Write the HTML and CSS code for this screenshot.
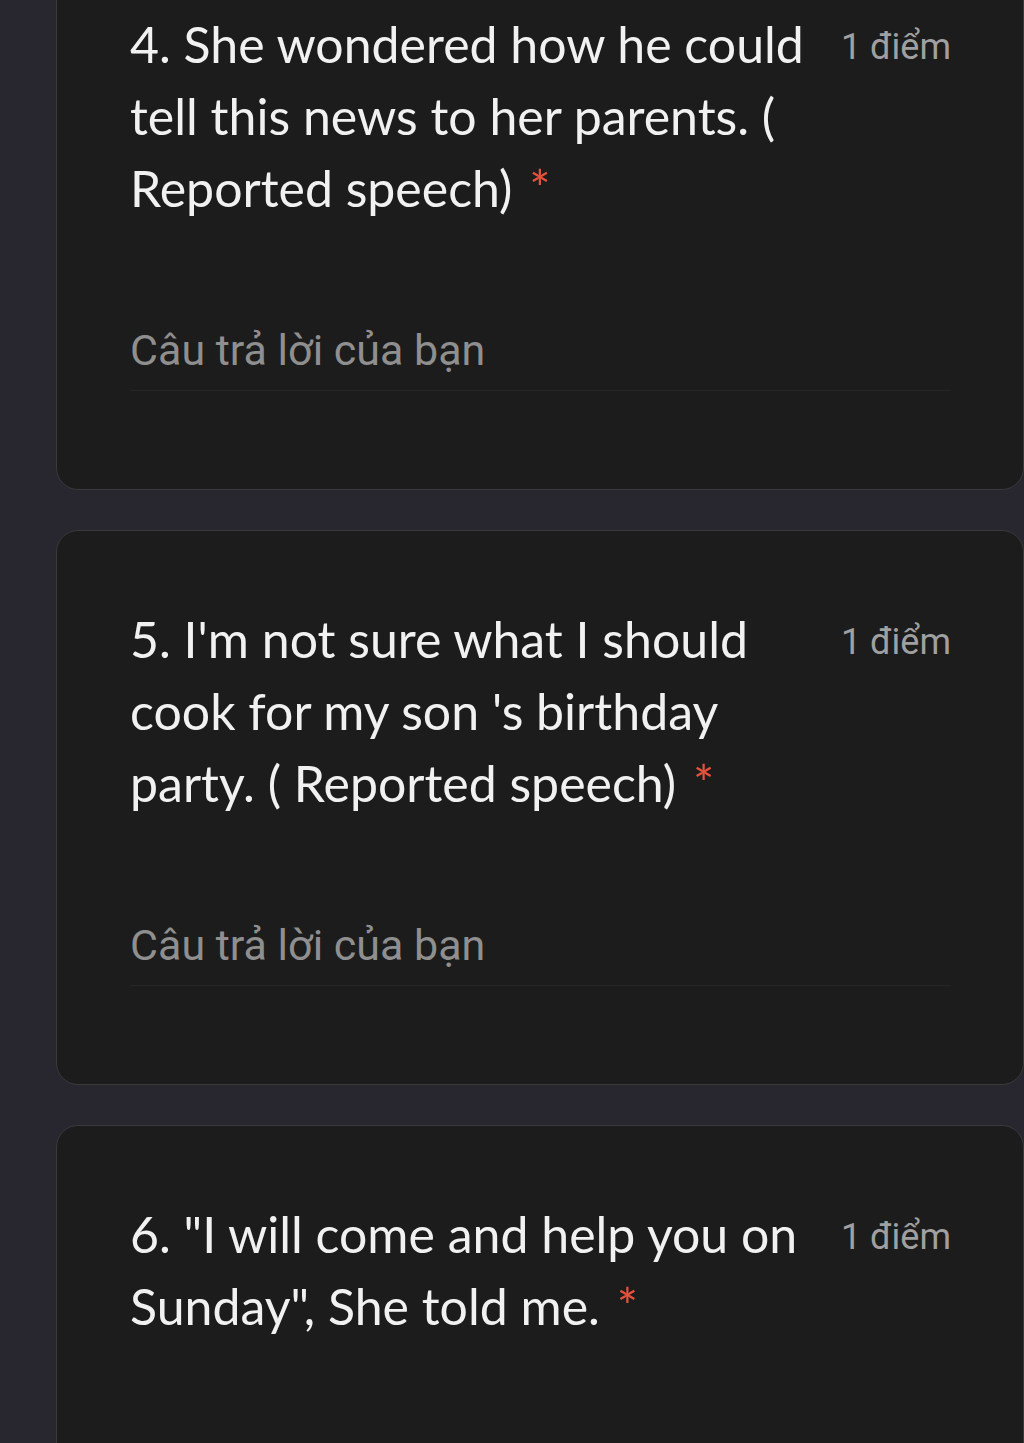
FILE: index.html
```html
<!DOCTYPE html>
<html lang="vi">
<head>
<meta charset="utf-8">
<title>Form</title>
<link rel="stylesheet" href="styles.css">
</head>
<body>
<div class="form">
  <section class="card">
    <div class="q-head">
      <div class="q-title">4. She wondered how he could<br>tell this news to her parents. (<br>Reported speech) <span class="req">*</span></div>
      <div class="q-points">1 điểm</div>
    </div>
    <div class="answer"><span class="placeholder">Câu trả lời của bạn</span></div>
  </section>
  <section class="card">
    <div class="q-head">
      <div class="q-title">5. I'm not sure what I should<br>cook for my son 's birthday<br>party. ( Reported speech) <span class="req">*</span></div>
      <div class="q-points">1 điểm</div>
    </div>
    <div class="answer"><span class="placeholder">Câu trả lời của bạn</span></div>
  </section>
  <section class="card card-last">
    <div class="q-head">
      <div class="q-title">6. "I will come and help you on<br>Sunday", She told me. <span class="req">*</span></div>
      <div class="q-points">1 điểm</div>
    </div>
  </section>
</div>
</body>
</html>
```
FILE: styles.css
```css
html, body {
  margin: 0;
  padding: 0;
  background: #28262f;
}
body {
  width: 1024px;
  height: 1443px;
  overflow: hidden;
}
.form {
  margin-top: -65px;
  padding-left: 56px;
  display: flex;
  flex-direction: column;
  gap: 40px;
}
.card {
  background: #1c1c1c;
  border: 1px solid #3a3a3c;
  border-radius: 22px;
  padding: 72px 72px 98px 73px;
}
.card-last {
  min-height: 400px;
}
.q-head {
  display: flex;
  justify-content: space-between;
  align-items: flex-start;
}
.q-title {
  font-family: Lato, "Open Sans", sans-serif;
  font-size: 50px;
  line-height: 72px;
  color: #f1f1f1;
}
.req {
  color: #e5533d;
  font-size: 50px;
  margin-left: 4px;
  vertical-align: 0;
}
.q-points {
  font-family: Roboto, sans-serif;
  font-size: 36px;
  line-height: 72px;
  color: #a0a0a0;
  padding-top: 3px;
  white-space: nowrap;
}
.answer {
  margin-top: 102px;
  padding-bottom: 16px;
  border-bottom: 1px solid #262626;
}
.placeholder {
  display: block;
  font-family: Roboto, sans-serif;
  font-size: 43px;
  line-height: 48px;
  color: #8f8f8f;
}
```
